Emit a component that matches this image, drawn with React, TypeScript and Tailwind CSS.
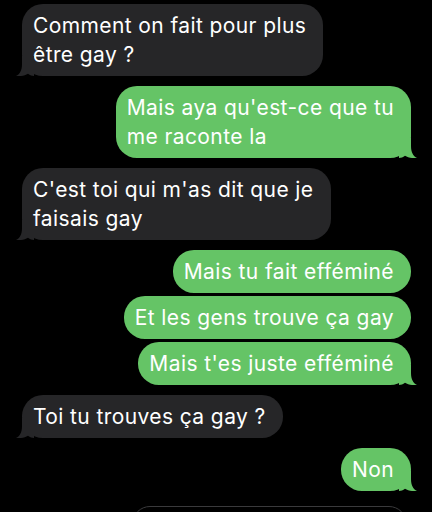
import React, { FC } from "react";

type Msg = { from: "me" | "them"; lines: string[]; tail?: boolean; gap: string };

const messages: Msg[] = [
  { from: "them", lines: ["Comment on fait pour plus", "être gay ?"], tail: true, gap: "mt-[4px]" },
  { from: "me", lines: ["Mais aya qu'est-ce que tu", "me raconte la"], tail: true, gap: "mt-[10px]" },
  { from: "them", lines: ["C'est toi qui m'as dit que je", "faisais gay"], tail: true, gap: "mt-[10px]" },
  { from: "me", lines: ["Mais tu fait efféminé"], gap: "mt-[10px]" },
  { from: "me", lines: ["Et les gens trouve ça gay"], gap: "mt-[3px]" },
  { from: "me", lines: ["Mais t'es juste efféminé"], tail: true, gap: "mt-[3px]" },
  { from: "them", lines: ["Toi tu trouves ça gay ?"], tail: true, gap: "mt-[10px]" },
  { from: "me", lines: ["Non"], tail: true, gap: "mt-[10px]" },
];

// little iMessage tail, drawn for the left side and mirrored for the right
const Tail: FC<{ color: string; right?: boolean }> = ({ color, right }) => (
  <svg
    width="18"
    height="20"
    viewBox="0 0 18 20"
    className={
      right
        ? "absolute bottom-0 right-[-6px] -scale-x-100"
        : "absolute bottom-0 left-[-6px]"
    }
  >
    <path
      d="M6 0 V8 C6 14 4 18 0 20 C5 20.5 9 19.5 12 17.8 C14 19.3 16 20 18 20 V0 Z"
      fill={color}
    />
  </svg>
);

const Bubble: FC<{ msg: Msg }> = ({ msg }) => {
  const me = msg.from === "me";
  return (
    <div className={`flex ${me ? "justify-end pr-[21px]" : "justify-start pl-[22px]"} ${msg.gap}`}>
      <div
        className={`relative rounded-[21px] pl-[11px] pr-[17px] py-[7px] text-[21px] leading-[29px] tracking-[0.4px] text-white ${
          me ? "bg-[#65c466]" : "bg-[#262628]"
        }`}
      >
        {msg.lines.map((l, i) => (
          <div key={i} className="whitespace-nowrap">
            {l}
          </div>
        ))}
        {msg.tail && <Tail color={me ? "#65c466" : "#262628"} right={me} />}
      </div>
    </div>
  );
};

export default function App() {
  return (
    <div
      className="relative flex h-[512px] w-[432px] flex-col overflow-hidden bg-black"
      style={{ fontFamily: "Inter, 'Liberation Sans', sans-serif" }}
    >
      {messages.map((m, i) => (
        <Bubble key={i} msg={m} />
      ))}

      {/* Message input */}
      <div className="mt-[15px] ml-[132px] mr-[25px] h-[36px] shrink-0 rounded-full border border-[#3a3a3c]" />
    </div>
  );
}
